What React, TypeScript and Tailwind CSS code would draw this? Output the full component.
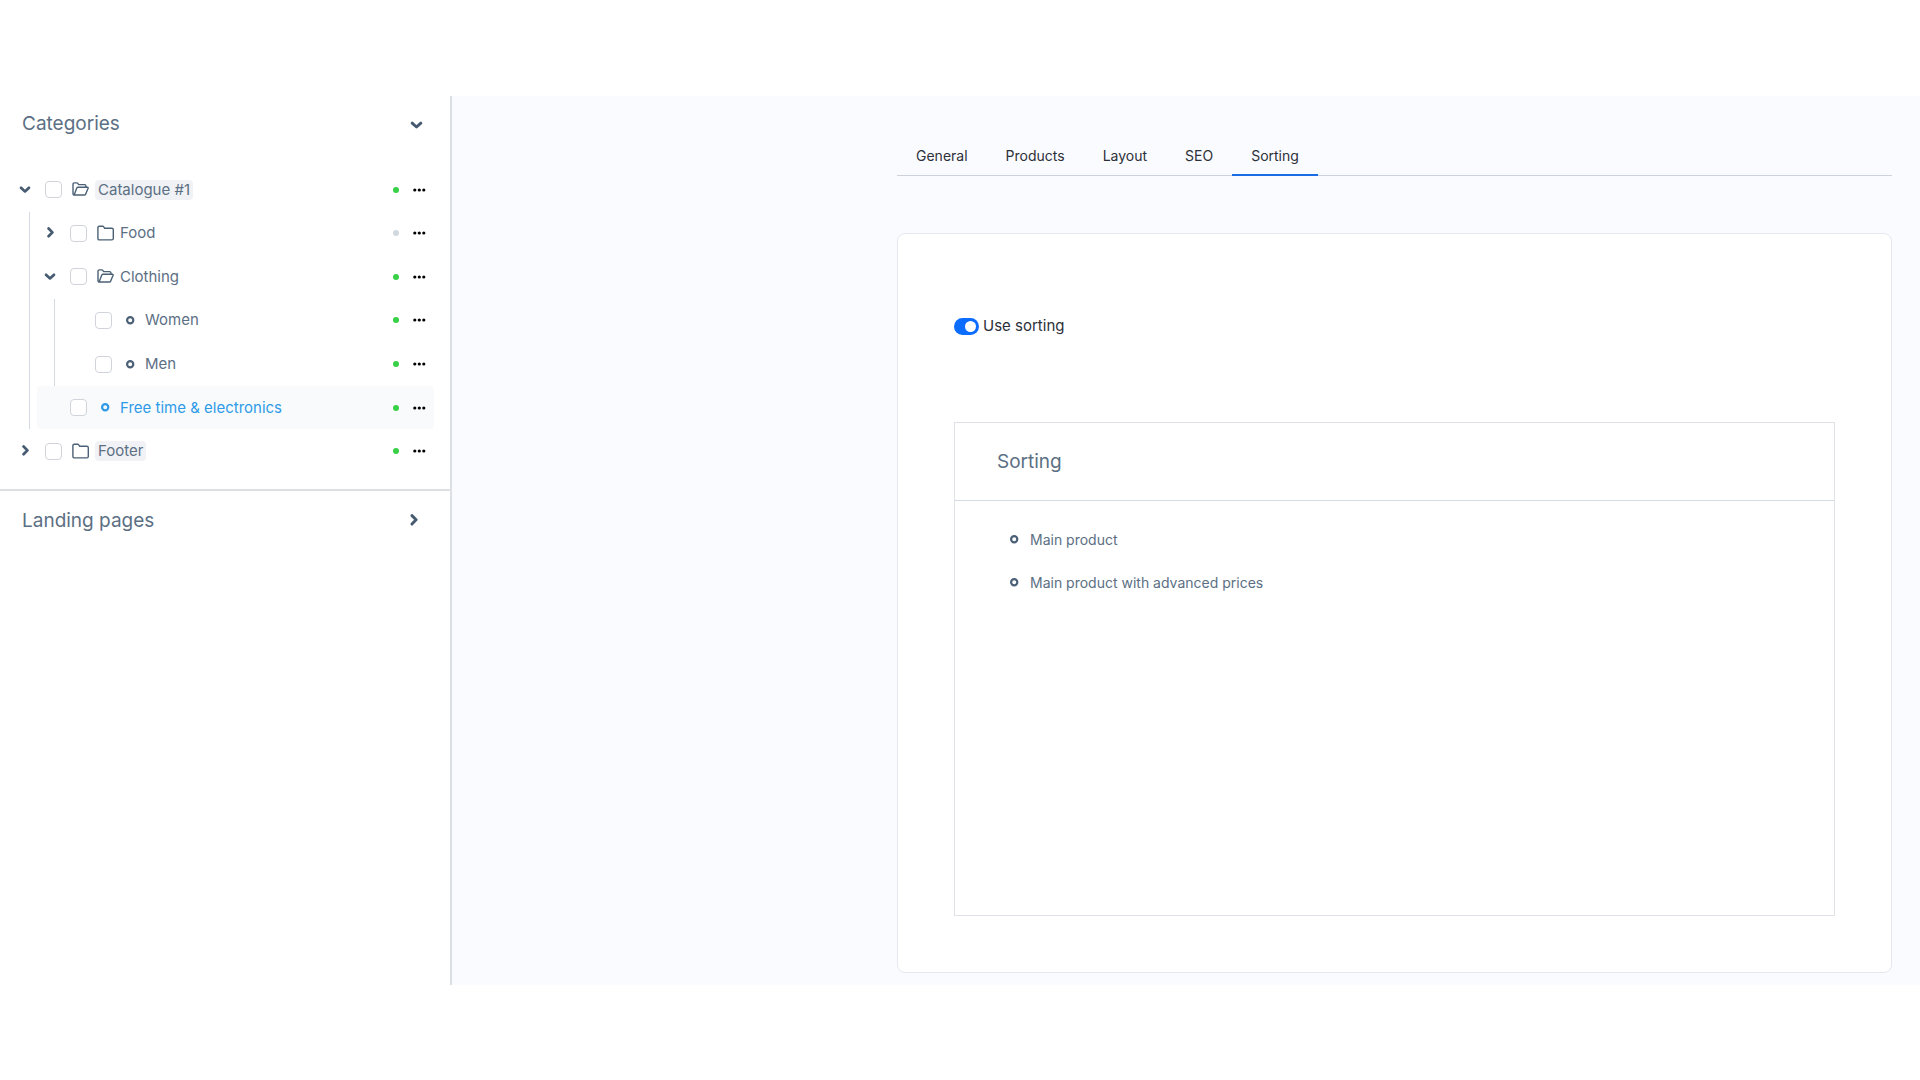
import { useState } from 'react';
import clsx from 'clsx';

type Icon = 'open' | 'folder' | 'ring';

interface TreeItem {
  id: string;
  label: string;
  depth: number;
  icon: Icon;
  expanded?: boolean;
  active: boolean;
  selected?: boolean;
}

const TREE: TreeItem[] = [
  { id: 'catalogue', label: 'Catalogue #1', depth: 0, icon: 'open', expanded: true, active: true },
  { id: 'food', label: 'Food', depth: 1, icon: 'folder', expanded: false, active: false },
  { id: 'clothing', label: 'Clothing', depth: 1, icon: 'open', expanded: true, active: true },
  { id: 'women', label: 'Women', depth: 2, icon: 'ring', active: true },
  { id: 'men', label: 'Men', depth: 2, icon: 'ring', active: true },
  { id: 'free-time', label: 'Free time & electronics', depth: 1, icon: 'ring', active: true, selected: true },
  { id: 'footer', label: 'Footer', depth: 0, icon: 'folder', expanded: false, active: true },
];

const TABS = ['General', 'Products', 'Layout', 'SEO', 'Sorting'];

const SORTINGS = ['Main product', 'Main product with advanced prices'];

function Chevron({ down, className }: { down?: boolean; className: string }) {
  return (
    <svg
      className={className}
      viewBox="0 0 12 12"
      fill="none"
      stroke="currentColor"
      strokeWidth={2.7}
      strokeLinecap="round"
      strokeLinejoin="round"
    >
      <path d={down ? 'M2 3.8L6 7.4l4-3.6' : 'M4.6 1.5L8.4 5.4l-3.8 3.9'} />
    </svg>
  );
}

function Ring() {
  return (
    <svg className="size-[9px]" viewBox="0 0 9 9" fill="none" stroke="currentColor" strokeWidth={2.2}>
      <circle cx="4.2" cy="4.2" r="3.1" />
    </svg>
  );
}

function NodeIcon({ icon }: { icon: Icon }) {
  if (icon === 'ring') return <Ring />;
  return (
    <svg
      className="size-[17px]"
      viewBox="0 0 17 17"
      fill="none"
      stroke="currentColor"
      strokeWidth={1.4}
      strokeLinejoin="round"
      strokeLinecap="round"
    >
      {icon === 'folder' ? (
        <path d="M.9 2.6A1.4 1.4 0 0 1 2.3 1.2h3.3c.5 0 .9.2 1.1.6l1 1.5h7.2a1.4 1.4 0 0 1 1.4 1.4v8.8a1.4 1.4 0 0 1-1.4 1.4H2.3a1.4 1.4 0 0 1-1.4-1.4z" />
      ) : (
        <path d="M2.4 14A1.3 1.3 0 0 1 1 12.7V3.2a1.3 1.3 0 0 1 1.3-1.3h2.5c.4 0 .8.2 1 .5l.9 1.2h5.9a1.3 1.3 0 0 1 1.3 1.3v1.3M2.2 14h10.2c.5 0 1-.3 1.2-.8l2.5-5.9c.2-.6-.1-1.1-.7-1.1H6c-.5 0-1 .3-1.2.8l-2.4 6.2c-.2.5-.2.8-.2.8z" />
      )}
    </svg>
  );
}

function TreeRow({ item }: { item: TreeItem }) {
  const [checked, setChecked] = useState(false);

  return (
    <li className="flex">
      {Array.from({ length: item.depth }, (_, i) => (
        <span key={i} className="flex w-[25px] shrink-0 pl-[17px]">
          <span className="border-l border-[#d3dae2]" />
        </span>
      ))}
      <div
        className={clsx(
          'flex min-w-0 flex-1 items-center rounded pr-2',
          item.selected ? 'bg-[#f8fafc] text-[#2f9be8]' : 'text-[#5c6f84]'
        )}
      >
        <span className="mr-[7px] flex w-[26px] shrink-0 justify-center text-[#465b72]">
          {item.expanded !== undefined && (
            <button type="button" aria-label={`Toggle ${item.label}`}>
              <Chevron down={item.expanded} className="size-3" />
            </button>
          )}
        </span>
        <input
          id={item.id}
          type="checkbox"
          checked={checked}
          onChange={(e) => setChecked(e.target.checked)}
          className="size-[17px] shrink-0 appearance-none rounded border border-[#d0d4da] bg-white checked:bg-[#2f9be8]"
        />
        <span
          className={clsx(
            'mr-[6px] ml-[10px] flex w-[17px] shrink-0 justify-center',
            !item.selected && 'text-[#4b6076]'
          )}
        >
          <NodeIcon icon={item.icon} />
        </span>
        <label
          htmlFor={item.id}
          className={clsx('truncate text-[15px] leading-5', item.depth === 0 && 'rounded bg-[#f0f2f5] px-[3px]')}
        >
          {item.label}
        </label>
        <span
          className={clsx('mr-[14px] ml-auto size-[6px] shrink-0 rounded-full', item.active ? 'bg-[#37d046]' : 'bg-[#d1d9e0]')}
        />
        <button type="button" aria-label={`Actions for ${item.label}`} className="text-black">
          <svg className="h-1 w-[13px]" viewBox="0 0 13 4" fill="currentColor">
            <circle cx="1.8" cy="2" r="1.6" />
            <circle cx="6.3" cy="2" r="1.6" />
            <circle cx="10.8" cy="2" r="1.6" />
          </svg>
        </button>
      </div>
    </li>
  );
}

function Sidebar() {
  return (
    <aside className="w-[452px] shrink-0 border-r-2 border-[#dcdfe4] bg-white text-[#5c6f84]">
      <section className="border-b-2 border-[#dcdfe4] pb-4">
        <button type="button" className="flex h-[72px] w-full items-start justify-between pt-[14px] pr-[27px] pl-[22px]">
          <span className="text-[19px] leading-7">Categories</span>
          <Chevron down className="mt-[9px] size-[13px] text-[#465b72]" />
        </button>
        <ul className="grid h-[305px] auto-rows-fr pr-4 pl-3">
          {TREE.map((item) => (
            <TreeRow key={item.id} item={item} />
          ))}
        </ul>
      </section>
      <button type="button" className="flex h-[59px] w-full items-center justify-between pr-[30px] pl-[22px]">
        <span className="text-[19px] leading-7">Landing pages</span>
        <Chevron className="size-[13px] text-[#465b72]" />
      </button>
    </aside>
  );
}

export default function App() {
  const [activeTab, setActiveTab] = useState('Sorting');
  const [useSorting, setUseSorting] = useState(true);

  return (
    <div className="min-h-screen bg-white py-24 font-['Inter',sans-serif]">
      <div className="flex">
        <Sidebar />

        <main className="min-w-0 flex-1 bg-[#fafbff] pt-[34px] pr-7 pb-3 pl-[445px]">
          <nav className="flex border-b border-[#cdd2da]">
            {TABS.map((tab) => (
              <button
                key={tab}
                type="button"
                onClick={() => setActiveTab(tab)}
                className={clsx(
                  '-mb-px h-[46px] border-b-2 px-[19px] pt-[7px] text-sm leading-5 text-[#2c3038]',
                  activeTab === tab ? 'border-[#1a6be6]' : 'border-transparent'
                )}
              >
                {tab}
              </button>
            ))}
          </nav>

          <div className="mt-[57px] rounded-lg border border-[#e6e8f0] bg-white px-14 pb-14">
            <label className="flex items-center gap-1 pt-[82px] text-[15px] leading-5 text-[#2c3038]">
              <input
                type="checkbox"
                role="switch"
                checked={useSorting}
                onChange={(e) => setUseSorting(e.target.checked)}
                className="flex h-[17px] w-[25px] appearance-none items-center rounded-full bg-[#c3cad3] px-[3px] before:size-[11px] before:rounded-full before:bg-white checked:justify-end checked:bg-[#0b6cff]"
              />
              Use sorting
            </label>

            <section className="mt-[86px] min-h-[494px] border border-[#dfe2e7] text-[#5c6f84]">
              <h2 className="border-b border-[#d5dbe2] px-[42px] pt-[25px] pb-6 text-[19px] leading-7">Sorting</h2>
              <ul className="px-[55px] pt-[17px]">
                {SORTINGS.map((name) => (
                  <li key={name} className="flex h-[43px] items-center gap-[11px] text-sm leading-5">
                    <span className="text-[#4b6076]">
                      <Ring />
                    </span>
                    {name}
                  </li>
                ))}
              </ul>
            </section>
          </div>
        </main>
      </div>
    </div>
  );
}
